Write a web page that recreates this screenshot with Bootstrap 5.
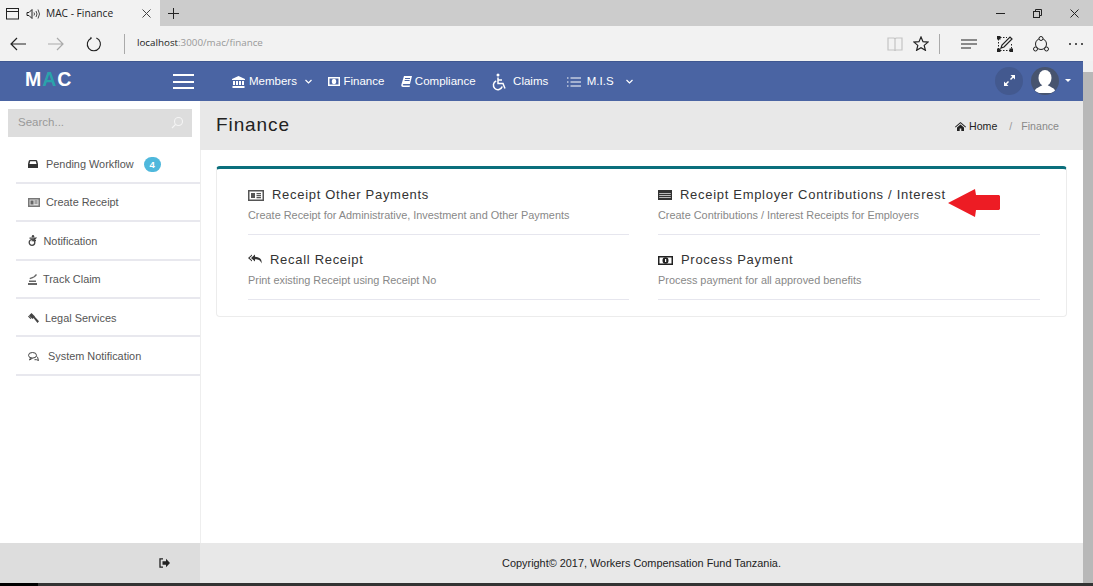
<!DOCTYPE html>
<html lang="en">
<head>
    <meta charset="UTF-8">
    <meta name="viewport" content="width=device-width, initial-scale=1.0">
    <title>MAC - Finance</title>
    <link href="https://cdn.jsdelivr.net/npm/bootstrap@5.3.0/dist/css/bootstrap.min.css" rel="stylesheet">
    <script src="https://cdn.jsdelivr.net/npm/bootstrap@5.3.0/dist/js/bootstrap.bundle.min.js"></script>
    <style>
        html, body { height: 100%; overflow: hidden; }
        body { font-family: "Liberation Sans", Arial, sans-serif; font-size: 11px; color: #444; background: #fff; display: flex; flex-direction: column; }
        svg { display: block; flex: none; }

        /* browser frame */
        .tab-strip { height: 26px; background: #ccc; color: #222; }
        .tab-active { width: 160px; background: #f2f2f2; padding: 1px 9px 0 6px; font-family: "Open Sans", sans-serif; font-size: 10.2px; }
        .tab-plus { width: 26px; }
        .win-btns { gap: 28px; padding-right: 14px; }
        .addr-bar { height: 35px; background: #f2f2f2; padding: 0 9px 0 10px; }
        .addr-sep { width: 1px; height: 20px; background: #aaa; }
        .addr-text { font-family: "Open Sans", sans-serif; font-size: 9.8px; color: #999; margin-left: 12px; }
        .addr-text b { font-weight: 400; color: #222; }
        .tools-right { margin-left: auto; }
        .ml-6 { margin-left: 6px; }
        .ml-7 { margin-left: 7px; }
        .ml-10 { margin-left: 10px; }
        .ml-19 { margin-left: 19px; }
        .ml-20 { margin-left: 20px; }
        .ml-21 { margin-left: 21px; }
        .ml-22 { margin-left: 22px; }

        .app-area { flex: 1; min-height: 0; }
        .app-col { flex: 1; min-width: 0; }
        .page-scroll { width: 10px; background: #b8b8b8; }
        .page-scroll i { display: block; height: 11px; background: #f0f0f0; }

        /* top nav */
        .top-bar { height: 40px; background: #4a64a3; color: #fff; border-top: 1px solid #3f5791; }
        .logo-box { width: 165px; padding-left: 25px; font-size: 19.5px; font-weight: 700; letter-spacing: 1px; margin-top: -4px; }
        .logo-box span { color: #2aa3ab; }
        .burger { width: 21px; height: 15px; border-top: 2px solid #fff; border-bottom: 2px solid #fff; position: relative; margin-left: 8px; margin-right: 38px; }
        .burger::after { content: ""; position: absolute; left: 0; right: 0; top: 4.500px; height: 2px; background: #fff; }
        .top-links { gap: 16.5px; }
        .top-link { color: #fff; font-size: 11.5px; text-decoration: none; gap: 4px; }
        .link-tight { gap: 3px; }
        .link-wide { gap: 6px; }
        .link-mis { gap: 6px; margin-left: 2px; }
        .nav-chev { margin-left: 4px; }
        .nav-chev-mis { margin-left: 6px; }
        .nav-tools { margin-bottom: 2px; }
        .round-btn { width: 28px; height: 28px; border-radius: 50%; background: #43598f; }
        .avatar { width: 28px; height: 28px; border-radius: 50%; background: #47546f; overflow: hidden; margin-left: 8px; }
        .user-caret { width: 0; height: 0; border-left: 3px solid transparent; border-right: 3px solid transparent; border-top: 3.500px solid #fff; margin: 0 12px 0 6px; }

        .body-row { flex: 1; min-height: 0; }

        /* left menu */
        .side-col { width: 200px; padding: 8px 0 0 8px; }
        .search-box { width: 184px; height: 28px; background: #ddd; padding: 0 9px 0 10px; color: #999; font-size: 11.5px; margin-bottom: 8.500px; }
        .side-menu { margin-left: 8px; }
        .side-item { height: 38.4px; border-bottom: 2px solid #e8e8ee; padding: 1px 0 0 12px; color: #555; font-size: 10.9px; }
        .ico-inbox { margin-right: 8px; }
        .ico-news { margin-right: 6px; }
        .ico-chair { margin-right: 6.500px; }
        .ico-stack { margin-right: 6px; }
        .ico-gavel { margin-right: 6px; }
        .ico-chat { margin-right: 9px; }
        .side-badge { background: #4fb8dc; color: #fff; font-size: 9.500px; font-weight: 700; line-height: 15px; height: 15px; width: 17px; text-align: center; border-radius: 8px; margin-left: 10px; }

        /* content */
        .main-col { flex: 1; min-width: 0; box-shadow: inset 1px 0 #eee; }
        .page-head { height: 49px; background: #e8e8e8; padding: 0 24px 0 16px; }
        .page-title { font-size: 19px; letter-spacing: .9px; color: #222; margin: 0; font-weight: 400; }
        .crumbs { font-size: 10.6px; color: #222; margin-top: 2px; }
        .crumbs .home-ico { margin-right: 3px; }
        .crumbs .sep { color: #999; margin: 0 9px 0 12px; }
        .crumbs .now { color: #888; }
        .finance-card { margin: 16px 16px 0; height: 151px; background: #fff; border: 1px solid #ececec; border-top: 3px solid #0b6f7c; border-radius: 4px; padding: 1px 0 0 31px; position: relative; }
        .fin-grid { display: grid; grid-template-columns: 381px 382px; column-gap: 29px; }
        .fin-item { height: 65px; border-bottom: 1px solid #e6e6ee; padding-top: 16px; }
        .fin-title { font-size: 13px; letter-spacing: .7px; color: #333; line-height: 18px; gap: 8px; }
        .fin-sub { font-size: 10.9px; color: #888; margin-top: 4px; line-height: 14px; }
        .red-arrow { position: absolute; left: 731px; top: 20px; }

        .foot-row { height: 40px; }
        .foot-left { width: 200px; background: #ddd; padding-right: 30px; }
        .foot-right { flex: 1; background: #e8e8e8; color: #222; font-size: 10.9px; }
        .os-strip { height: 3px; background: #333; }
        .os-strip i { display: block; width: 38px; height: 3px; background: #000; }
    </style>
</head>
<body>
    <!-- browser tab strip -->
    <div class="tab-strip d-flex align-items-stretch">
        <div class="tab-active d-flex align-items-center">
            <svg width="13" height="12" viewBox="0 0 13 12" fill="none" stroke="#222"><rect x=".5" y=".5" width="12" height="10.5"/><path d="M.5 3.500h12"/></svg>
            <svg class="ml-7" width="14" height="12" viewBox="0 0 14 12" fill="none" stroke="#222"><path d="M1 4.500v3h2l3 3v-9l-3 3z"/><path d="M8 4.500q1 1.500 0 3M10 3q2 3 0 6M12 1.500q3 4.500 0 9" stroke-width=".8"/></svg>
            <span class="ml-6">MAC - Finance</span>
            <svg class="ms-auto" width="9" height="9" viewBox="0 0 9 9" stroke="#444"><path d="M.5.500l8 8M8.500.500l-8 8"/></svg>
        </div>
        <div class="tab-plus d-flex align-items-center justify-content-center">
            <svg width="11" height="11" viewBox="0 0 11 11" stroke="#222"><path d="M5.500 0v11M0 5.500h11"/></svg>
        </div>
        <div class="win-btns d-flex align-items-center ms-auto">
            <svg width="9" height="9" viewBox="0 0 9 9" stroke="#222"><path d="M0 4.500h9"/></svg>
            <svg width="9" height="9" viewBox="0 0 9 9" fill="none" stroke="#222"><rect x=".5" y="2.500" width="6" height="6"/><path d="M2.500 2.500v-2h6v6h-2"/></svg>
            <svg width="9" height="9" viewBox="0 0 9 9" stroke="#222"><path d="M.5.500l8 8M8.500.500l-8 8"/></svg>
        </div>
    </div>

    <!-- browser address bar -->
    <div class="addr-bar d-flex align-items-center">
        <svg width="16" height="14" viewBox="0 0 16 14" fill="none" stroke="#222" stroke-width="1.200"><path d="M16 7H1M7 1L1 7l6 6"/></svg>
        <svg class="ml-22" width="16" height="14" viewBox="0 0 16 14" fill="none" stroke="#aaa" stroke-width="1.200"><path d="M0 7h15M9 1l6 6-6 6"/></svg>
        <svg class="ml-22" width="16" height="16" viewBox="0 0 17 17" fill="none" stroke="#222" stroke-width="1.200"><path d="M11 2.200A7 7 0 1 1 5.500 2.300"/><path d="M5 1l.7 1.500L4 3.200" stroke-width="1"/></svg>
        <div class="addr-sep ml-22"></div>
        <div class="addr-text"><b>localhost</b>:3000/mac/finance</div>
        <div class="tools-right d-flex align-items-center">
            <svg width="16" height="14" viewBox="0 0 16 14" fill="none" stroke="#c4c4c4" stroke-width="1.200"><path d="M1 1h6l1 1 1-1h6v12H9l-1 .5L7 13H1zM8 2v11"/></svg>
            <svg class="ml-10" width="16" height="15" viewBox="0 0 16 15" fill="none" stroke="#222" stroke-width="1.200"><path d="M8 1l2 4.700 5 .4-3.800 3.300 1.200 4.900L8 11.700l-4.400 2.600 1.200-4.900L1 6.100l5-.4z"/></svg>
            <div class="addr-sep ml-10"></div>
            <svg class="ml-21" width="16" height="12" viewBox="0 0 16 12" stroke="#222" stroke-width="1.200"><path d="M0 2h16M0 6h16M0 10h10"/></svg>
            <svg class="ml-20" width="16" height="16" viewBox="0 0 16 16" fill="none" stroke="#222"><path d="M1.500 3v10M3 14.500h10M3 1.500h7M14.500 8v5" stroke-dasharray="1.500 1.500"/><rect width="3" height="3" fill="#222"/><rect y="13" width="3" height="3" fill="#222"/><rect x="13" y="13" width="3" height="3" fill="#222"/><path d="M4 12l1-3 8-8 2 2-8 8z" stroke-width="1.200"/></svg>
            <svg class="ml-20" width="16" height="16" viewBox="0 0 16 16" fill="none" stroke="#222"><circle cx="8" cy="8" r="5.500"/><circle cx="8" cy="2.500" r="2" fill="#f2f2f2"/><circle cx="2.500" cy="13" r="2" fill="#f2f2f2"/><circle cx="13.500" cy="13" r="2" fill="#f2f2f2"/></svg>
            <svg class="ml-19" width="16" height="4" viewBox="0 0 16 4" fill="#222"><circle cx="2" cy="2" r="1"/><circle cx="8" cy="2" r="1"/><circle cx="14" cy="2" r="1"/></svg>
        </div>
    </div>

    <div class="app-area d-flex">
        <div class="app-col d-flex flex-column">
            <!-- app navbar -->
            <nav class="top-bar d-flex align-items-center">
                <div class="logo-box">M<span>A</span>C</div>
                <div class="burger"></div>
                <div class="top-links d-flex align-items-center">
                    <a class="top-link d-flex align-items-center" href="#">
                        <svg width="13" height="12" viewBox="0 0 13 12" fill="#fff"><path d="M6.500 0L13 3v1H0V3zM1 5h2v4H1zM4 5h2v4H4zM7 5h2v4H7zM10 5h2v4h-2zM.5 10h12v2H.5z"/></svg>
                        Members
                        <svg class="nav-chev" width="7" height="5" viewBox="0 0 7 5" fill="none" stroke="#fff" stroke-width="1.200"><path d="M.5 1l3 3 3-3"/></svg>
                    </a>
                    <a class="top-link link-tight d-flex align-items-center" href="#">
                        <svg width="12" height="9" viewBox="0 0 12 9"><path fill="#fff" fill-rule="evenodd" d="M0 0h12v9H0zM1.500 1.500v6h9v-6z"/><ellipse cx="6" cy="4.500" rx="2.200" ry="2.800" fill="#fff"/></svg>
                        Finance
                    </a>
                    <a class="top-link link-tight d-flex align-items-center" href="#">
                        <svg width="11" height="11" viewBox="0 0 11 11" fill="#fff"><path d="M3 0h8L9 8H2.500C1.500 8 1.500 9.500 2.500 9.500H9L8.600 11H2C.5 11 0 10 .4 8.500zM4 2v1h5V2zM3.600 4v1h5V4z" fill-rule="evenodd"/></svg>
                        Compliance
                    </a>
                    <a class="top-link link-wide d-flex align-items-center" href="#">
                        <svg width="15" height="18" viewBox="0 0 15 18" fill="none" stroke="#fff" stroke-width="1.500"><circle cx="6" cy="2" r="1.500" fill="#fff" stroke="none"/><path d="M6 4.500v6h5l2 5"/><path d="M6 7h4"/><path d="M4.200 8a4.500 4.500 0 1 0 6 5.500"/></svg>
                        Claims
                    </a>
                    <a class="top-link link-mis d-flex align-items-center" href="#">
                        <svg width="14" height="10" viewBox="0 0 14 10" stroke="#fff"><path d="M0 1h1.500M0 5h1.500M0 9h1.500M3.500 1H14M3.500 5H14M3.500 9H14"/></svg>
                        M.I.S
                        <svg class="nav-chev-mis" width="7" height="5" viewBox="0 0 7 5" fill="none" stroke="#fff" stroke-width="1.200"><path d="M.5 1l3 3 3-3"/></svg>
                    </a>
                </div>
                <div class="nav-tools ms-auto d-flex align-items-center">
                    <div class="round-btn d-flex align-items-center justify-content-center">
                        <svg width="11" height="11" viewBox="0 0 11 11" fill="#fff"><path d="M6.500 0H11v4.500L9.300 2.800 7 5 6 4l2.200-2.300zM4.500 11H0V6.500l1.700 1.700L4 6l1 1-2.200 2.300z"/></svg>
                    </div>
                    <div class="avatar">
                        <svg width="28" height="28" viewBox="0 0 28 28" fill="#fff"><ellipse cx="14" cy="11" rx="6.500" ry="8"/><path d="M4 24c0-3 5-4 7.500-6h5c2.500 2 7.500 3 7.500 6l-4 2H8z"/></svg>
                    </div>
                    <div class="user-caret"></div>
                </div>
            </nav>

            <div class="body-row d-flex">
                <!-- left menu -->
                <aside class="side-col">
                    <div class="search-box d-flex align-items-center justify-content-between">
                        <span>Search...</span>
                        <svg width="12" height="12" viewBox="0 0 12 12" fill="none" stroke="#f4f4f4" stroke-width="1.100"><circle cx="7.500" cy="4.500" r="4"/><path d="M4.500 7.500L1 11"/></svg>
                    </div>
                    <div class="side-menu">
                        <div class="side-item d-flex align-items-center">
                            <svg class="ico-inbox" width="10" height="8" viewBox="0 0 10 8" fill="#333"><path fill-rule="evenodd" d="M2 0h6q1 0 1.300 1L10 4v4H0V4l.7-3Q1 0 2 0zM2.200 1.200L1.500 4h7l-.7-2.800z"/></svg>
                            <span>Pending Workflow</span>
                            <span class="side-badge">4</span>
                        </div>
                        <div class="side-item d-flex align-items-center">
                            <svg class="ico-news" width="12" height="9" viewBox="0 0 12 9"><path fill="#777" d="M0 0h12v9H0z"/><path fill="#ddd" d="M1.500 1.500h9v6h-9z"/><path fill="#666" d="M2.500 2.500h3v4h-3zM6.500 2.500h3v1h-3zM6.500 4.500h3v1h-3z"/></svg>
                            <span>Create Receipt</span>
                        </div>
                        <div class="side-item d-flex align-items-center">
                            <svg class="ico-chair" width="9" height="11" viewBox="0 0 9 11" fill="none" stroke="#444" stroke-width="1.300"><circle cx="5" cy="1.200" r="1.200" fill="#444" stroke="none"/><path d="M1.500 3.200h6L5 5.500h3"/><circle cx="4" cy="7.500" r="2.800"/></svg>
                            <span>Notification</span>
                        </div>
                        <div class="side-item d-flex align-items-center">
                            <svg class="ico-stack" width="9" height="11" viewBox="0 0 9 11" fill="#666"><path d="M0 9h9v2H0zM1 6.500h7V8H1zM1.500 4l4-1.500.5 1.200-4 1.500zM5.500 2.500L8 0l1 1-2.500 2.500z"/></svg>
                            <span>Track Claim</span>
                        </div>
                        <div class="side-item d-flex align-items-center">
                            <svg class="ico-gavel" width="11" height="10" viewBox="0 0 11 10" fill="#444"><path d="M3.500 0L7 3.500 4.500 6 1 2.500zM5.500 5L6.800 3.800 11 8.300 9.500 10zM0 3.500L.8 2.700l2.500 2.500-.8.800z"/></svg>
                            <span>Legal Services</span>
                        </div>
                        <div class="side-item d-flex align-items-center">
                            <svg class="ico-chat" width="11" height="9" viewBox="0 0 11 9" fill="none" stroke="#444"><ellipse cx="4.500" cy="3.300" rx="4" ry="2.800"/><path d="M2.500 6L1.500 8l3-1.800M8.500 4.500q2 1 1.500 2.500l.5 1.500-2-.8H6.500"/></svg>
                            <span>System Notification</span>
                        </div>
                    </div>
                </aside>

                <!-- page content -->
                <main class="main-col">
                    <div class="page-head d-flex align-items-center justify-content-between">
                        <h1 class="page-title">Finance</h1>
                        <div class="crumbs d-flex align-items-center">
                            <svg class="home-ico" width="11" height="9" viewBox="0 0 11 9" fill="#222"><path d="M5.500 0L11 4.800l-.6.600-4.900-4.200L.6 5.400 0 4.800zM2 5.500l3.500-3 3.500 3V9H6.300V6.500H4.700V9H2z"/></svg>
                            <span>Home</span><span class="sep">/</span><span class="now">Finance</span>
                        </div>
                    </div>
                    <div class="finance-card">
                        <div class="fin-grid">
                            <div class="fin-item">
                                <div class="fin-title d-flex align-items-center">
                                    <svg width="16" height="11" viewBox="0 0 16 11"><path fill="#555" d="M0 0h16v11H0z"/><path fill="#fff" d="M1.500 1.500h13v8h-13z"/><path fill="#555" d="M3 3h4v5H3zM8.500 3H13v1.200H8.500zM8.500 5H13v1.200H8.500zM8.500 7H13v1.200H8.500z"/></svg>
                                    <span>Receipt Other Payments</span>
                                </div>
                                <div class="fin-sub">Create Receipt for Administrative, Investment and Other Payments</div>
                            </div>
                            <div class="fin-item">
                                <div class="fin-title d-flex align-items-center">
                                    <svg width="14" height="10" viewBox="0 0 14 10"><path fill="#333" d="M0 0h14v10H0z"/><path fill="#bbb" d="M1.200 3h11.600v1H1.200zM1.200 5h11.600v1H1.200zM1.200 7h11.600v1H1.200z"/></svg>
                                    <span>Receipt Employer Contributions / Interest</span>
                                </div>
                                <div class="fin-sub">Create Contributions / Interest Receipts for Employers</div>
                            </div>
                            <div class="fin-item">
                                <div class="fin-title d-flex align-items-center">
                                    <svg width="14" height="12" viewBox="0 0 14 12" fill="#333"><path d="M4 .5v1.300L1.600 4 4 6.200v1.300L0 4z"/><path d="M7 .5L3 4l4 3.500V5.200c3.500 0 5.500.8 6.500 4.300.8-4.500-2-6.500-6.500-6.800z"/></svg>
                                    <span>Recall Receipt</span>
                                </div>
                                <div class="fin-sub">Print existing Receipt using Receipt No</div>
                            </div>
                            <div class="fin-item">
                                <div class="fin-title d-flex align-items-center">
                                    <svg width="15" height="9" viewBox="0 0 15 9"><path fill="#222" fill-rule="evenodd" d="M0 0h15v9H0zM1.500 1.500v6h12v-6z"/><ellipse cx="7.500" cy="4.500" rx="3" ry="3.200" fill="#222"/><rect x="7" y="3" width="1.200" height="3" fill="#fff"/></svg>
                                    <span>Process Payment</span>
                                </div>
                                <div class="fin-sub">Process payment for all approved benefits</div>
                            </div>
                        </div>
                        <svg class="red-arrow" width="52" height="28" viewBox="0 0 52 28" fill="#ed1c24"><path d="M0 14L27 0l1 6h23l1 1v13l-1 1H28l-1 7z"/></svg>
                    </div>
                </main>
            </div>

            <footer class="foot-row d-flex">
                <div class="foot-left d-flex align-items-center justify-content-end">
                    <svg width="11" height="10" viewBox="0 0 11 10"><path fill="none" stroke="#222" stroke-width="1.300" d="M4 .8H1v8.400h3"/><path fill="#222" d="M3.500 3.300h3.500V.8L11 5 7 9.200V6.700H3.500z"/></svg>
                </div>
                <div class="foot-right d-flex align-items-center justify-content-center">Copyright© 2017, Workers Compensation Fund Tanzania.</div>
            </footer>
        </div>
        <div class="page-scroll"><i></i></div>
    </div>
    <div class="os-strip"><i></i></div>
</body>
</html>
